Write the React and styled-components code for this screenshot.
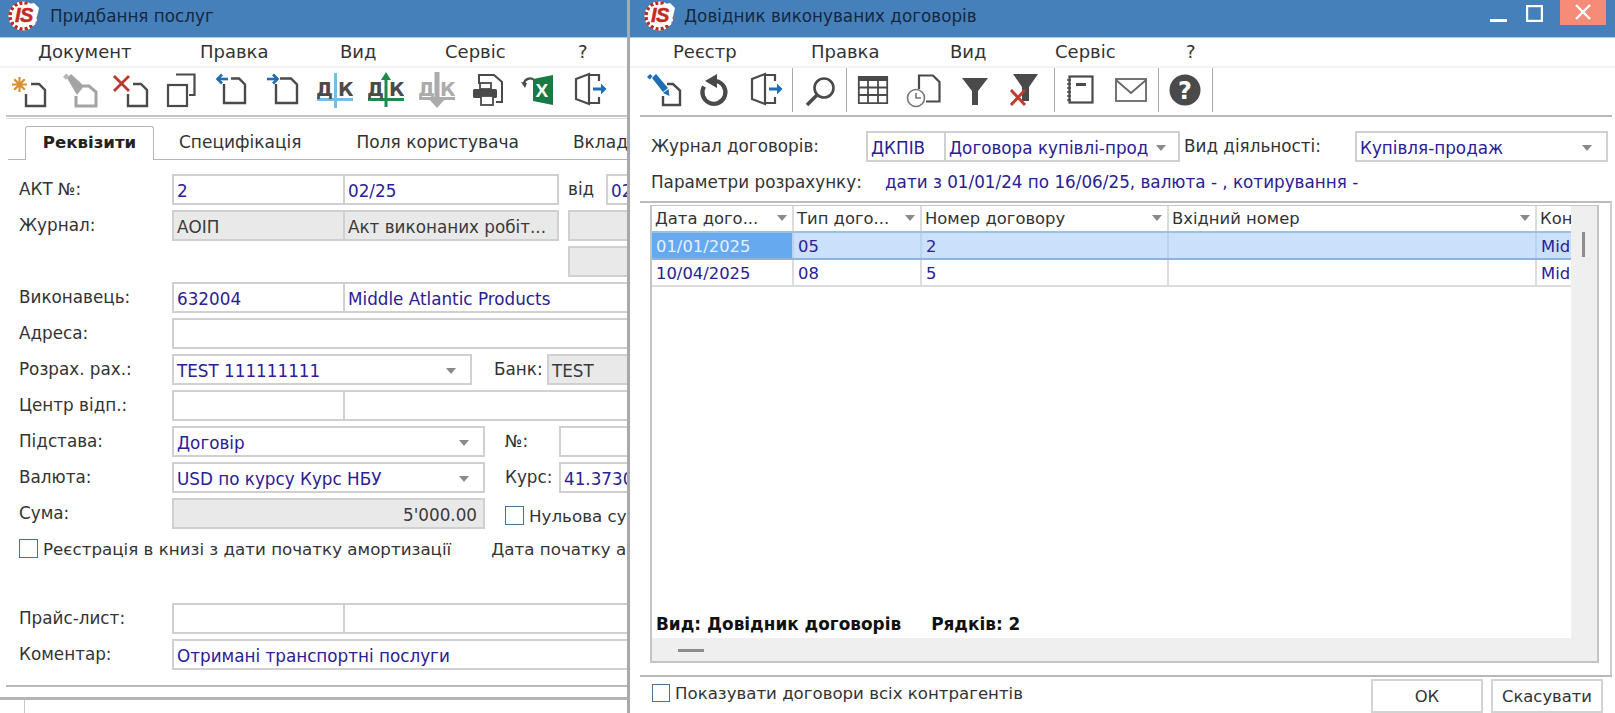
import React from 'react';
import styled, { createGlobalStyle } from 'styled-components';

const Global = createGlobalStyle`
  html, body { margin: 0; padding: 0; background: #fff; }
  body { font-family: "DejaVu Sans", Verdana, sans-serif; font-size: 16.8px; color: #333; overflow: hidden; }
`;

const Page = styled.div`display: flex; width: 1615px; height: 713px; overflow: hidden; background: #fff;`;
const Win = styled.div`
  display: flex; flex-direction: column; overflow: hidden; height: 713px; position: relative;
  width: ${p => p.$w}px; flex: none;
`;
const LeftWin = styled(Win)`border-right: 3px solid #a9a9a9; box-sizing: content-box;`;

const TitleBar = styled.div`
  height: 31px; flex: none; background: #4680bb; border-bottom: 1px solid #a9cbe8;
  display: flex; align-items: center; color: #14283f; font-size: 16.8px; padding-bottom: 6px; box-sizing: content-box;
  padding-left: ${p => p.$pl}px;
`;
const TitleText = styled.span`margin-left: ${p => p.$ml}px; white-space: nowrap;`;
const WinControls = styled.div`margin-left: auto; display: flex; align-items: flex-start; margin-top: 4px; height: 33px;`;
const CtlBtn = styled.svg`display: block; margin-right: ${p => p.$mr}px; margin-top: ${p => p.$mt || 0}px; flex: none;`;

const MenuBar = styled.div`
  height: 30px; flex: none; display: flex; align-items: center; border-bottom: 2px solid #f3f3f3; box-sizing: border-box; padding-bottom: 2px;
  font-size: 18px; color: #333; position: relative; padding-left: ${p => p.$pl}px;
`;
const MenuItem = styled.span`flex: none; width: ${p => p.$w}px;`;

const Toolbar = styled.div`
  height: 47px; flex: none; display: flex; align-items: center; padding-bottom: 3px; box-sizing: border-box;
  padding-left: ${p => p.$pl}px;
`;
const ToolBtn = styled.svg`display: block; flex: none; width: 36px; height: 36px; margin-right: ${p => p.$mr ?? 15}px;`;
const ToolSep = styled.div`width: 1px; height: 44px; background: #a8a8a8; flex: none; margin: 0 ${p => p.$r ?? 8}px 0 0;`;
const DoubleRule = styled.div`
  flex: none; height: 1px; border-top: 2px solid #c4c4c4; border-bottom: 1px solid #dcdcdc; margin-left: 6px;
`;
const SingleRule = styled.div`flex: none; height: 2px; background: #b9b9b9; margin: ${p => p.$m || '0 3px 0 10px'};`;

const Tabs = styled.div`
  flex: none; height: 34px; margin-top: 6px; display: flex; align-items: flex-end; position: relative;
  border-bottom: 1px solid #b5b5b5; margin-left: 8px; box-sizing: content-box; font-size: 17px;
`;
const ActiveTab = styled.div`
  width: 129px; height: 34px; box-sizing: border-box; margin-left: 17px; margin-bottom: -1px; flex: none;
  border: 1px solid #b5b5b5; border-bottom: 0; border-radius: 3px 3px 0 0; background: #fff;
  font-weight: 700; color: #222; text-align: center; line-height: 32px; font-size: 16.6px;
`;
const Tab = styled.div`
  flex: none; height: 33px; line-height: 32px; color: #333; white-space: nowrap; margin-left: ${p => p.$ml}px;
`;

const Form = styled.div`flex: none; padding: 14px 0 0 19px; height: 525px; box-sizing: border-box;`;
const Row = styled.div`
  display: flex; height: 31px; margin-bottom: 5px; width: 608px; align-items: stretch;
`;
const Label = styled.div`
  width: ${p => p.$w ?? 153}px; flex: none; line-height: 30px; color: #333; white-space: nowrap; font-size: 16.8px;
  margin-left: ${p => p.$ml ?? 0}px;
`;
const Field = styled.div`
  flex: none; box-sizing: border-box; width: ${p => p.$w}px; border: 2px solid #d0d0d0;
  margin-left: ${p => (p.$join ? -2 : p.$ml ?? 0)}px;
  background: ${p => (p.$ro ? '#e9e9e9' : '#fff')};
  color: ${p => (p.$ro ? '#3a3a3a' : '#2b2094')};
  line-height: 30px; padding: 0 ${p => (p.$right ? 6 : 3)}px 0 3px; font-size: 16.8px; white-space: nowrap; overflow: hidden;
  text-align: ${p => (p.$right ? 'right' : 'left')};
  position: relative;
`;
const ClipText = styled.span`display: block; overflow: hidden; width: ${p => p.$w}px;`;
const Caret = styled.i`
  position: absolute; right: ${p => p.$r ?? 14}px; top: ${p => p.$t ?? 12}px; width: 0; height: 0;
  border-left: 5px solid transparent; border-right: 5px solid transparent; border-top: 6px solid #8a8a8a;
`;
const Check = styled.span`
  flex: none; box-sizing: border-box; display: block; width: ${p => p.$s ?? 19}px; height: ${p => p.$s ?? 19}px; border: 1.5px solid #4b7195; background: #fff;
  margin-left: ${p => p.$ml ?? 0}px; margin-top: ${p => p.$mt ?? 0}px; margin-right: 5px;
`;
const CheckRow = styled.div`display: flex; height: 31px; width: 608px; align-items: flex-start; padding-top: 5px; margin-bottom: 38px; box-sizing: border-box;`;
const CheckText = styled.span`
  white-space: nowrap; color: #333; line-height: 20px; font-size: ${p => p.$fs ?? 16.7}px;
  margin-left: ${p => p.$ml ?? 0}px; margin-top: ${p => p.$mt ?? 0}px;
`;

const StatusBar = styled.div`
  flex: 1; border-top: 3px solid #b5b5b5; margin-top: 10px; display: flex;
`;
const StatusCell = styled.div`width: 24px; border-right: 1px solid #c8c8c8;`;

const Content = styled.div`flex: 1; display: flex; flex-direction: column; padding: 14px 0 0 0; min-height: 0;`;
const TopRow = styled.div`display: flex; height: 31px; padding-left: 21px; flex: none;`;
const ParamRow = styled.div`display: flex; height: 20px; margin-top: 10px; padding-left: 21px; flex: none; line-height: 20px; white-space: nowrap;`;
const ParamLabel = styled.span`width: 234px; flex: none; color: #333;`;
const ParamValue = styled.span`color: #2b2094;`;
const Frame = styled.div`
  flex: none; margin: 9px 3px 0 10px; height: 474px; border-top: 2px solid #bcbcbc; border-right: 2px solid #cfcfcf;
  padding: 2px 11px 0 10px; box-sizing: border-box;
`;
const Pane = styled.div`
  border: 2px solid #c4c4c4; border-top-width: 1px; height: 458px; box-sizing: border-box;
  display: flex; flex-direction: column; overflow: hidden; background: #efefef;
`;
const GridArea = styled.div`flex: 1; display: flex; min-height: 0;`;
const Table = styled.div`width: 919px; flex: none; overflow: hidden; background: #fff;`;
const GridRow = styled.div`
  display: grid; grid-template-columns: 142px 128px 247px 368px 34px; height: 27px;
  border-bottom: ${p => p.$bb || '2px solid #dcdcdc'}; box-sizing: border-box;
  background: ${p => p.$bg || '#fff'};
`;
const Head = styled.div`
  border-right: 2px solid #dcdcdc; padding-left: 3px; line-height: 25px; color: #333; position: relative; white-space: nowrap; overflow: hidden; font-size: 16.4px;
  &:last-child { border-right: 0; }
`;
const Cell = styled.div`
  border-right: 2px solid ${p => p.$line || '#dcdcdc'}; padding-left: 4px; line-height: 27px; white-space: nowrap; overflow: hidden; font-size: 16.4px;
  color: ${p => (p.$sel ? '#e4f0fc' : '#2b2094')}; background: ${p => (p.$sel ? '#66a9ef' : 'transparent')};
  &:last-child { border-right: 0; }
`;
const VTrack = styled.div`width: 25px; flex: none; margin-left: 1px; position: relative;`;
const VThumb = styled.div`position: absolute; left: 10px; top: 26px; width: 3px; height: 25px; background: #8d8d8d;`;
const GridStatus = styled.div`
  flex: none; height: 38px; width: 919px; display: flex; align-items: flex-start; font-weight: 700; color: #111; padding: 14px 0 0 4px; box-sizing: border-box; line-height: 20px; font-size: 16.9px; background: #fff;
`;
const StatusText = styled.span`white-space: nowrap; margin-right: ${p => p.$mr}px;`;
const HTrack = styled.div`flex: none; height: 23px; position: relative;`;
const HThumb = styled.div`position: absolute; left: 26px; top: 11px; width: 26px; height: 3px; background: #8d8d8d;`;

const Footer = styled.div`flex: 1; display: flex; padding: 0 12px 0 22px; align-items: flex-start; min-height: 0;`;
const FooterCheck = styled.div`display: flex; align-items: flex-start; margin-right: auto; padding-top: 7px;`;
const Btn = styled.div`
  flex: none; width: ${p => p.$w}px; height: 34px; box-sizing: border-box; border: 2px solid #d2d2d2; text-align: center; line-height: 32px;
  color: #333; margin-top: 2px; margin-left: ${p => p.$ml ?? 0}px; font-size: 16.4px;
`;

const Logo = () => (
  <svg width="32" height="34" viewBox="0 0 32 34" style={{ display: 'block', flex: 'none' }}>
    <circle cx="15" cy="17" r="14.5" fill="#fff" />
    <circle cx="15" cy="17" r="13" fill="none" stroke="#b82a22" strokeWidth="3.4" strokeDasharray="3 2.2" />
    <path d="M6 8 L26 4 L31 9 L27 26 L6 26 Z" fill="#fff" />
    <text x="7" y="23" fontFamily="'Liberation Sans', sans-serif" fontSize="20" fontWeight="700" fontStyle="italic" fill="#c52a20" stroke="#c52a20" strokeWidth=".5" letterSpacing="-.5">IS</text>
  </svg>
);

const G = '#4a4a4a';
const Icon = ({ mr, children }) => (
  <ToolBtn viewBox="0 0 36 36" $mr={mr}>{children}</ToolBtn>
);
const Arrow = ({ x, y, c = '#1f6db3', dir = 1 }) => (
  <g stroke={c} fill="none" strokeWidth="2.6">
    <path d={`M${x} ${y}h${11 * dir}`} />
    <path d={`M${x + (dir > 0 ? 6 : -6)} ${y - 4.5}l${4.5 * dir} 4.5l${-4.5 * dir} 4.5`} />
  </g>
);
const DK = ({ c = G }) => (
  <text y="24" fontFamily="'DejaVu Sans', sans-serif" fontWeight="700" fontSize="19" fill={c}>
    <tspan x="-1">Д</tspan><tspan x="21">К</tspan>
  </text>
);
const Exit = () => (
  <g fill="none">
    <path d="M4 7L17 2V32L4 27Z" stroke={G} strokeWidth="2.2" />
    <path d="M17 3H27V9 M27 25V31H17" stroke={G} strokeWidth="2.2" />
    <path d="M21 17h10" stroke="#1f6db3" strokeWidth="3" />
    <path d="M29 11.5l5.5 5.5l-5.5 5.5z" fill="#1f6db3" />
  </g>
);

const leftIcons = [
  <><g stroke="#d9912b" strokeWidth="2.2"><path d="M8.500 5V20M1 12.500H16M3.200 7.200L13.800 17.800M13.800 7.200L3.200 17.800"/></g><path d="M20 12H28L34 18V34H15V22" fill="none" stroke={G} strokeWidth="2.4"/></>,
  <><path d="M5 6L9 2L22 14L15 23Z" fill="#a4a4a4"/><path d="M1 5L4 1.500L7 4L4 8Z" fill="#b8b8b8"/><path d="M21 14H27L34 20V34H14V24" fill="none" stroke="#a4a4a4" strokeWidth="3"/></>,
  <><g stroke="#b93a2c" strokeWidth="2.8"><path d="M1 4L16 19M16 4L1 19"/></g><path d="M20 12H28L34 18V34H15V22" fill="none" stroke={G} strokeWidth="2.4"/></>,
  <><path d="M12 2.500H30.500V23H25" fill="none" stroke={G} strokeWidth="2.2"/><rect x="4" y="13" width="19" height="21" fill="#fff" stroke={G} strokeWidth="2.2"/></>,
  <><Arrow x={13} y={7} dir={-1}/><path d="M16 6.500H24L30 12.500V31H9V12" fill="none" stroke={G} strokeWidth="2.4"/></>,
  <><Arrow x={1} y={7}/><path d="M14 6.500H25L31 12.500V31H10V12" fill="none" stroke={G} strokeWidth="2.4"/></>,
  <><rect x="17" y="1" width="3" height="35" fill="#74bde6"/><rect x="0" y="26" width="36" height="3" fill="#74bde6"/><DK/></>,
  <><path d="M18 0L23 8H13Z" fill="#1d8a4c"/><rect x="16.500" y="6" width="3" height="29" fill="#1d8a4c"/><rect x="0" y="26" width="36" height="3" fill="#1d8a4c"/><DK/></>,
  <><rect x="15.500" y="0" width="5" height="30" fill="#ababab"/><path d="M18 36L10 27H26Z" fill="#ababab"/><rect x="0" y="25" width="36" height="3" fill="#ababab"/><DK c="#ababab"/></>,
  <><path d="M9 12V3H24L32 10V30H26" fill="none" stroke={G} strokeWidth="2"/><rect x="10" y="11" width="11" height="6" fill="#fff" stroke={G} strokeWidth="1.800"/><rect x="3" y="17" width="24" height="9" rx="1.500" fill={G}/><rect x="11" y="24" width="12" height="9" fill="#fff" stroke={G} strokeWidth="1.800"/></>,
  <><path d="M3 12a6 6 0 0 1 10-4" fill="none" stroke={G} strokeWidth="2.2"/><path d="M0 10l6 1-2 5z" fill={G}/><path d="M12 7L32 3V33L12 29Z" fill="#197a45"/><text x="14.500" y="25" fontFamily="'Liberation Sans', sans-serif" fontWeight="700" fontSize="19" fill="#fff">X</text></>,
  <Exit/>,
];

const rightIconsA = [
  <><path d="M6 6L10 2L22 16L17 20Z" fill="#1f6db3"/><path d="M1 5L4 2L6.500 4L4 7.500Z" fill="#1f6db3"/><path d="M17 21l5.500-4l1 7z" fill="#1f6db3"/><path d="M21 12H27L34 18.500V33H17V24" fill="none" stroke={G} strokeWidth="2.4"/></>,
  <><path d="M19 9A11.500 11.500 0 1 1 7 14.500" fill="none" stroke={G} strokeWidth="4.200"/><path d="M20 2L8 9L20 16Z" fill={G}/></>,
  <Exit/>,
];
const Lens = <><circle cx="22" cy="16" r="9.500" fill="none" stroke={G} strokeWidth="2.600"/><path d="M15 23L5 33" stroke={G} strokeWidth="3.600"/></>;
const GridIcon = <><rect x="3" y="4" width="30" height="5" fill={G}/><path d="M3.800 4.800H32.200V31.200H3.800Z M3 15.500H33M3 23H33M13 9V32M23 9V32" fill="none" stroke={G} strokeWidth="1.800"/></>;
const rightIconsB = [
  <><path d="M13 17V3.500H27L33.500 10V29.500H20" fill="none" stroke={G} strokeWidth="2.200"/><circle cx="10" cy="26" r="8.500" fill="#fff" stroke="#777" strokeWidth="1.600"/><path d="M10 21v5h5" fill="none" stroke="#777" strokeWidth="1.600"/></>,
  <path d="M5 6H31L21 19V33H15V19Z" fill={G}/>,
  <><path d="M5 2H30L21 15V29H14V15Z" fill={G}/><g stroke="#c13c2b" strokeWidth="3"><path d="M3 18L17 33M17 18L3 33"/></g></>,
];
const rightIconsC = [
  <><rect x="6.500" y="4.500" width="23" height="26" fill="none" stroke={G} strokeWidth="2.200"/><path d="M4 8h4M4 12h4M4 16h4M4 20h4M4 24h4M4 28h4" stroke={G} strokeWidth="1.400"/><rect x="13" y="11" width="10" height="3" fill={G}/></>,
  <><rect x="4" y="7" width="30" height="22" fill="none" stroke="#666" strokeWidth="1.800"/><path d="M4 8L19 21L34 8" fill="none" stroke="#666" strokeWidth="1.800"/></>,
];
const HelpIcon = <><circle cx="18" cy="18" r="15.500" fill={G}/><text x="18" y="26.500" textAnchor="middle" fontFamily="'DejaVu Sans', sans-serif" fontWeight="700" fontSize="24" fill="#fff">?</text></>;

const leftMenu = [['Документ', 162], ['Правка', 140], ['Вид', 105], ['Сервіс', 133], ['?', 20]];
const rightMenu = [['Реєстр', 138], ['Правка', 139], ['Вид', 105], ['Сервіс', 131], ['?', 20]];

const FormRows = () => (
  <Form>
    <Row><Label>АКТ №:</Label><Field $w={173}>2</Field><Field $w={216} $join>02/25</Field><Label $w={38} $ml={9}>від</Label><Field $w={100}>02</Field></Row>
    <Row><Label>Журнал:</Label><Field $w={173} $ro>АОІП</Field><Field $w={216} $join $ro>Акт виконаних робіт...</Field><Field $w={200} $ro $ml={9} /></Row>
    <Row><Label $w={549}></Label><Field $w={200} $ro /></Row>
    <Row><Label>Виконавець:</Label><Field $w={173}>632004</Field><Field $w={400} $join>Middle Atlantic Products</Field></Row>
    <Row><Label>Адреса:</Label><Field $w={570} /></Row>
    <Row><Label>Розрах. рах.:</Label><Field $w={300}>TEST 111111111<Caret /></Field><Label $w={53} $ml={22}>Банк:</Label><Field $w={200} $ro>TEST</Field></Row>
    <Row><Label>Центр відп.:</Label><Field $w={173} /><Field $w={400} $join /></Row>
    <Row><Label>Підстава:</Label><Field $w={313}>Договір<Caret /></Field><Label $w={54} $ml={20}>№:</Label><Field $w={100} /></Row>
    <Row><Label>Валюта:</Label><Field $w={313}>USD по курсу Курс НБУ<Caret /></Field><Label $w={54} $ml={20}>Курс:</Label><Field $w={100}>41.3730</Field></Row>
    <Row><Label>Сума:</Label><Field $w={313} $ro $right>5'000.00</Field><Check $ml={20} $mt={8} /><CheckText $mt={8}>Нульова су</CheckText></Row>
    <CheckRow><Check /><CheckText>Реєстрація в книзі з дати початку амортизації</CheckText><CheckText $ml={40}>Дата початку а</CheckText></CheckRow>
    <Row><Label>Прайс-лист:</Label><Field $w={173} /><Field $w={400} $join /></Row>
    <Row><Label>Коментар:</Label><Field $w={570}>Отримані транспортні послуги</Field></Row>
  </Form>
);

export default function App() {
  return (
    <Page>
      <Global />
      <LeftWin $w={627}>
        <TitleBar $pl={8}><Logo /><TitleText $ml={10}>Придбання послуг</TitleText></TitleBar>
        <MenuBar $pl={38}>{leftMenu.map(([t, w]) => <MenuItem key={t} $w={w}>{t}</MenuItem>)}</MenuBar>
        <Toolbar $pl={11}>{leftIcons.map((ic, i) => <Icon key={i}>{ic}</Icon>)}</Toolbar>
        <DoubleRule />
        <Tabs>
          <ActiveTab>Реквізити</ActiveTab>
          <Tab $ml={25}>Специфікація</Tab>
          <Tab $ml={55}>Поля користувача</Tab>
          <Tab $ml={54}>Вкладе</Tab>
        </Tabs>
        <FormRows />
        <SingleRule $m="0 0 0 6px" />
        <StatusBar><StatusCell /></StatusBar>
      </LeftWin>
      <Win $w={985}>
        <TitleBar $pl={14}>
          <Logo /><TitleText $ml={8}>Довідник виконуваних договорів</TitleText>
          <WinControls>
            <CtlBtn width="17" height="3" $mr={19} $mt={18} viewBox="0 0 17 3"><rect width="17" height="3" fill="#fff" /></CtlBtn>
            <CtlBtn width="17" height="17" $mr={17} $mt={4} viewBox="0 0 17 17"><rect x="1" y="1" width="15" height="15" fill="none" stroke="#fff" strokeWidth="2.4" /></CtlBtn>
            <CtlBtn width="46" height="26" $mr={9} $mt={-2} viewBox="0 0 46 26"><rect width="46" height="26" fill="#f68b78" /><path d="M16 6L30 20M30 6L16 20" stroke="#fff" strokeWidth="2.4" /></CtlBtn>
          </WinControls>
        </TitleBar>
        <MenuBar $pl={43}>{rightMenu.map(([t, w]) => <MenuItem key={t} $w={w}>{t}</MenuItem>)}</MenuBar>
        <Toolbar $pl={16}>
          {rightIconsA.map((ic, i) => <Icon key={i} mr={i === 2 ? 8 : 15}>{ic}</Icon>)}
          <ToolSep $r={9} />
          <Icon mr={8}>{Lens}</Icon>
          <ToolSep $r={8} />
          {[GridIcon, ...rightIconsB].map((ic, i) => <Icon key={i} mr={i === 3 ? 10 : 15}>{ic}</Icon>)}
          <ToolSep $r={8} />
          {rightIconsC.map((ic, i) => <Icon key={i} mr={i === 1 ? 10 : 13}>{ic}</Icon>)}
          <ToolSep $r={8} />
          <Icon mr={9}>{HelpIcon}</Icon>
          <ToolSep />
        </Toolbar>
        <SingleRule />
        <Content>
          <TopRow>
            <Label $w={215}>Журнал договорів:</Label>
            <Field $w={80}>ДКПІВ</Field>
            <Field $w={236} $join><ClipText $w={199}>Договора купівлі-прод</ClipText><Caret $r={12} /></Field>
            <Label $w={171} $ml={4}>Вид діяльності:</Label>
            <Field $w={253}>Купівля-продаж<Caret /></Field>
          </TopRow>
          <ParamRow><ParamLabel>Параметри розрахунку:</ParamLabel><ParamValue>дати з 01/01/24 по 16/06/25, валюта - , котирування -</ParamValue></ParamRow>
          <Frame>
            <Pane>
              <GridArea>
                <Table>
                  <GridRow $bb="2px solid #9fbfe0">
                    <Head>Дата дого...<Caret $r={5} $t={9} /></Head>
                    <Head>Тип дого...<Caret $r={5} $t={9} /></Head>
                    <Head>Номер договору<Caret $r={5} $t={9} /></Head>
                    <Head>Вхідний номер<Caret $r={5} $t={9} /></Head>
                    <Head>Кон</Head>
                  </GridRow>
                  <GridRow $bg="#cbe1fb" $bb="2px solid #8fb5de">
                    <Cell $sel $line="#b9d3f0">01/01/2025</Cell><Cell $line="#b9d3f0">05</Cell><Cell $line="#b9d3f0">2</Cell><Cell $line="#b9d3f0"></Cell><Cell>Mid</Cell>
                  </GridRow>
                  <GridRow>
                    <Cell>10/04/2025</Cell><Cell>08</Cell><Cell>5</Cell><Cell></Cell><Cell>Mid</Cell>
                  </GridRow>
                </Table>
                <VTrack><VThumb /></VTrack>
              </GridArea>
              <GridStatus><StatusText $mr={30}>Вид: Довідник договорів</StatusText><StatusText $mr={0}>Рядків: 2</StatusText></GridStatus>
              <HTrack><HThumb /></HTrack>
            </Pane>
          </Frame>
          <SingleRule $m="0 3px 0 10px" />
          <Footer>
            <FooterCheck><Check $s={18} /><CheckText $fs={16.6}>Показувати договори всіх контрагентів</CheckText></FooterCheck>
            <Btn $w={112}>ОК</Btn>
            <Btn $w={112} $ml={8}>Скасувати</Btn>
          </Footer>
        </Content>
      </Win>
    </Page>
  );
}
